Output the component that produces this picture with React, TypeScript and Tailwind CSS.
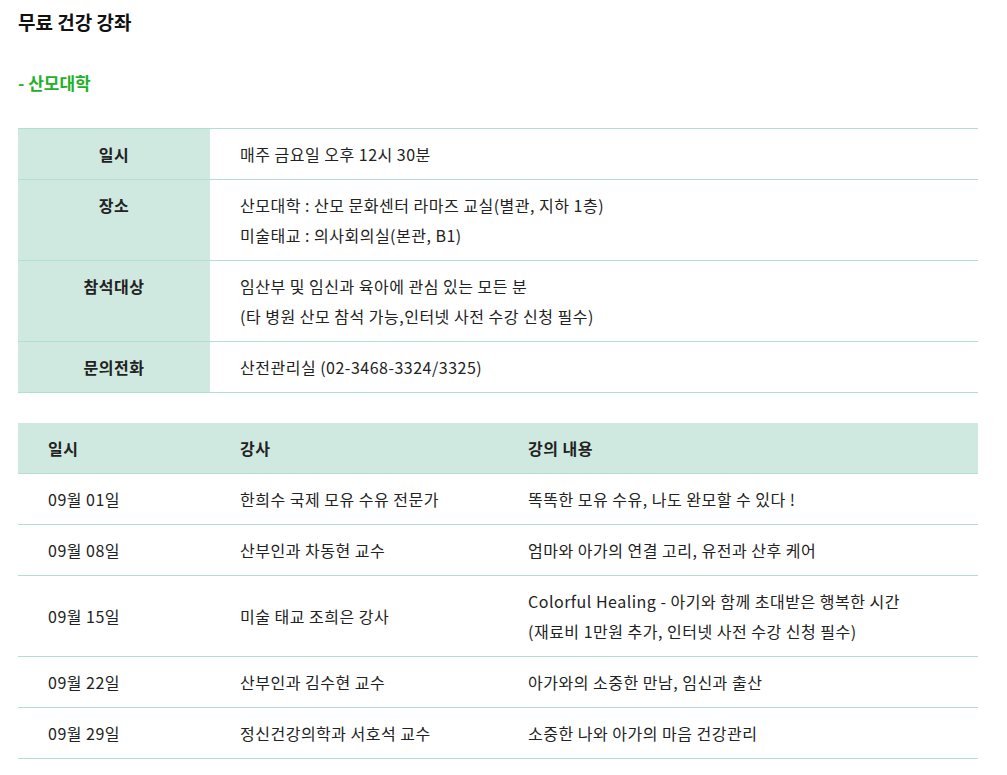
import React from "react";

const font = { fontFamily: '"Noto Sans CJK KR", "Noto Sans", sans-serif' };

export default function App() {
  const info: [string, string[]][] = [
    ["일시", ["매주 금요일 오후 12시 30분"]],
    ["장소", ["산모대학 : 산모 문화센터 라마즈 교실(별관, 지하 1층)", "미술태교 : 의사회의실(본관, B1)"]],
    ["참석대상", ["임산부 및 임신과 육아에 관심 있는 모든 분", "(타 병원 산모 참석 가능,인터넷 사전 수강 신청 필수)"]],
    ["문의전화", ["산전관리실 (02-3468-3324/3325)"]],
  ];
  const rows: [string, string, string[]][] = [
    ["09월 01일", "한희수 국제 모유 수유 전문가", ["똑똑한 모유 수유, 나도 완모할 수 있다 !"]],
    ["09월 08일", "산부인과 차동현 교수", ["엄마와 아가의 연결 고리, 유전과 산후 케어"]],
    ["09월 15일", "미술 태교 조희은 강사", ["Colorful Healing - 아기와 함께 초대받은 행복한 시간", "(재료비 1만원 추가, 인터넷 사전 수강 신청 필수)"]],
    ["09월 22일", "산부인과 김수현 교수", ["아가와의 소중한 만남, 임신과 출산"]],
    ["09월 29일", "정신건강의학과 서호석 교수", ["소중한 나와 아가의 마음 건강관리"]],
  ];
  return (
    <div className="bg-white w-[1007px] min-h-[775px] px-[18px] text-[#222]" style={font}>
      <h1 className="pt-[8px] text-[19px] font-bold leading-[28px] text-[#111]">무료 건강 강좌</h1>
      <h2 className="mt-[33px] text-[17px] font-bold leading-[28px] text-[#22b02a]">- 산모대학</h2>
      <table className="mt-[31px] w-[960px] border-collapse border-t border-[#b0e0d4] text-[16px] leading-[30px] tracking-[0.5px]">
        <tbody>
          {info.map(([k, v]) => (
            <tr key={k} className="border-b border-[#b0e0d4]">
              <th className="w-[192px] bg-[#cfe9e1] py-[10px] align-top text-center font-bold">{k}</th>
              <td className="py-[10px] pl-[30px] align-top">
                {v.map((l) => (
                  <div key={l}>{l}</div>
                ))}
              </td>
            </tr>
          ))}
        </tbody>
      </table>
      <table className="mt-[30px] w-[960px] border-collapse text-[16px] leading-[30px] tracking-[0.5px]">
        <thead>
          <tr className="bg-[#cfe9e1] border-b border-[#b0e0d4]">
            <th className="w-[192px] py-[10px] pl-[30px] text-left font-bold">일시</th>
            <th className="w-[288px] py-[10px] pl-[30px] text-left font-bold">강사</th>
            <th className="py-[10px] pl-[30px] text-left font-bold">강의 내용</th>
          </tr>
        </thead>
        <tbody>
          {rows.map(([d, t, c]) => (
            <tr key={d} className="border-b border-[#b0e0d4]">
              <td className="py-[10px] pl-[30px] align-middle">{d}</td>
              <td className="py-[10px] pl-[30px] align-middle">{t}</td>
              <td className="py-[10px] pl-[30px] align-middle">
                {c.map((l) => (
                  <div key={l}>{l}</div>
                ))}
              </td>
            </tr>
          ))}
        </tbody>
      </table>
    </div>
  );
}
